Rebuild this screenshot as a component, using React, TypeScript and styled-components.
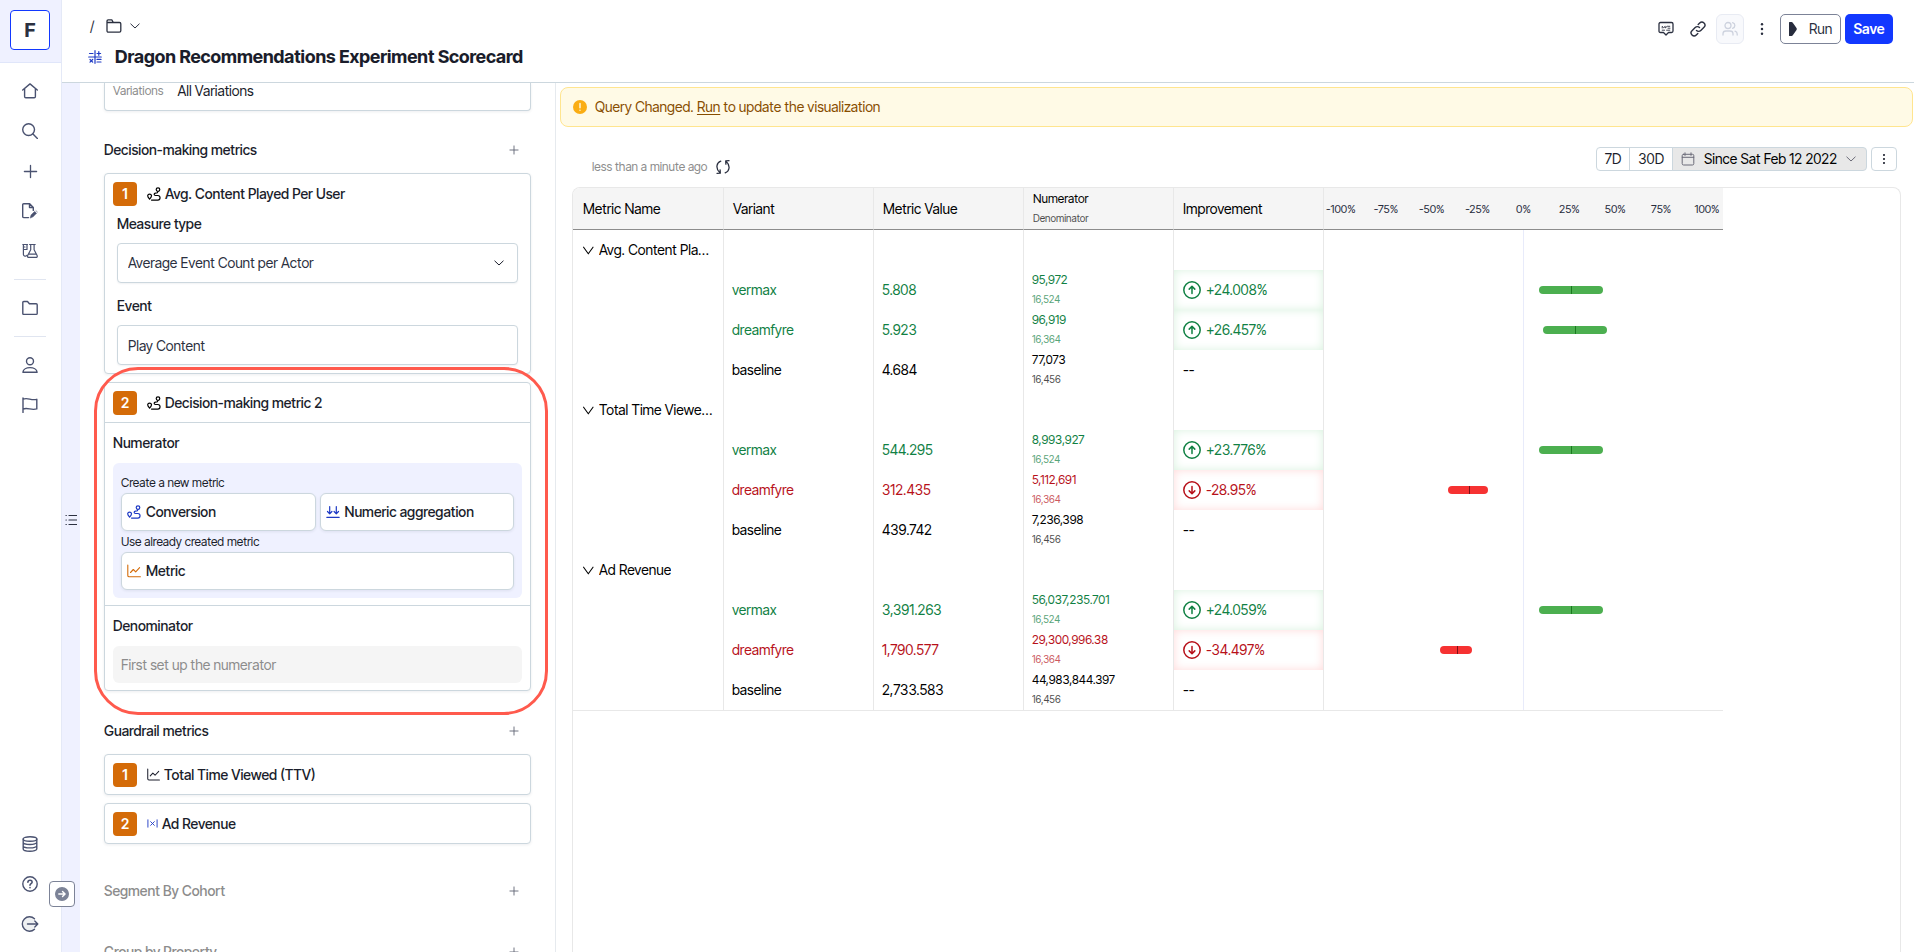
import React from "react";
import styled, { createGlobalStyle, css } from "styled-components";

const ink = "#1a1d2b";
const slate = "#4a5270";
const line = "#ccd7de";
const tableLine = "#e8e8e8";
const lavender = "#eff1ff";
const orange = "#d46b08";
const blue = "#1d39c4";
const green = "#108043";
const red = "#b71019";

const GlobalStyle = createGlobalStyle`
  *, *::before, *::after { box-sizing: border-box; }
  body {
    margin: 0;
    color: ${ink};
    background: #fff;
    font-family: "Inter Tight", "Inter Display", Inter, "Liberation Sans", sans-serif;
    font-size: 14px;
    line-height: 20px;
  }
  button, input, select { font: inherit; color: inherit; margin: 0; }
  button { cursor: pointer; }
  h1, h2, h3 { margin: 0; font-size: 14px; font-weight: 500; }
  svg { display: block; flex: none; }
`;

/* ---------- icons ---------- */

type IconProps = { size?: number; stroke?: number; box?: number; children: React.ReactNode };
const Icon = ({ size = 16, stroke = 1.4, box = 16, children }: IconProps) => (
  <svg width={size} height={size} viewBox={`0 0 ${box} ${box}`} fill="none" stroke="currentColor"
    strokeWidth={stroke} strokeLinecap="round" strokeLinejoin="round" aria-hidden="true">
    {children}
  </svg>
);

const HomeIcon = () => <Icon><path d="M.7 7 8 .9 15.3 7M2.6 5.6v8q0 1.2 1.200 1.200h8.400q1.200 0 1.200-1.200v-8" /></Icon>;
const SearchIcon = () => <Icon><circle cx="6.600" cy="6.600" r="5.900" /><path d="m11 11 4.400 4.400" /></Icon>;
const PlusIcon = ({ size = 16 }: { size?: number }) => <Icon size={size}><path d="M8 1.500v13M1.500 8h13" /></Icon>;
const DocEditIcon = () => (
  <Icon>
    <path d="M6.500 14.600H1.700q-1 0-1-1V1.800q0-1 1-1h6l3.600 3.600v3M7.500 1v3.500H11" />
    <path d="m8.300 14.700.8-2.800 3.600-3.500 1.800 1.800-3.500 3.600zM14 7.700l1.400 1.300" fill="currentColor" strokeWidth=".6" />
  </Icon>
);
const LabIcon = () => (
  <Icon stroke={1.200}>
    <path d="M.8 1.500h4.700M1.400 1.500v10a1.900 1.900 0 0 0 3.500.8M5 1.500v5M1.400 6.500H5M1.400 4H3" />
    <path d="M7.600 1.500h5.600M8.700 1.500v5.300l-2.900 5.400q-.9 2.200 1.200 2.200h6.800q2.100 0 1.200-2.200l-2.900-5.400V1.500M6.500 11.200h7.800" />
  </Icon>
);
const FolderIcon = () => <Icon><path d="M.8 13.400V2.500q0-1 1-1h3.700l1.900 2.300h6.800q1 0 1 1v8.600q0 1-1 1H1.800q-1 0-1-1Z" /></Icon>;
const UserIcon = () => <Icon><circle cx="8" cy="4.300" r="3.500" /><path d="M.9 15.200c.5-6.100 13.700-6.100 14.200 0Z" /></Icon>;
const FlagIcon = () => <Icon><path d="M1 15.500V1M1 2.200c5-2 8 1.700 13.800.1v9.600C9 13.600 6 10.200 1 12" /></Icon>;
const DatabaseIcon = () => (
  <Icon><ellipse cx="8" cy="3" rx="6.800" ry="2.200" /><path d="M1.200 3v10c0 2.900 13.600 2.900 13.600 0V3M1.200 6.300c0 2.900 13.600 2.900 13.600 0M1.200 9.700c0 2.900 13.600 2.900 13.600 0" /></Icon>
);
const HelpIcon = () => (
  <Icon><circle cx="8" cy="8" r="7.200" /><path d="M5.900 6.200c.1-2.700 4.300-2.600 4.200 0 0 1.400-2.100 1.500-2.100 3M8 11.600v.1" strokeWidth="1.600" /></Icon>
);
const LogoutIcon = () => (
  <Icon size={18} box={18}><path d="M13.500 3.800A7.200 7.200 0 1 0 13.500 14.200" fill="#eef0f2" /><path d="M6.500 9h10.300M13.800 6l3 3-3 3" /></Icon>
);
const ListIcon = () => (
  <Icon size={12} box={12} stroke={1.200}><path d="M4 1.500h7.500M4 6h7.500M4 10.500h7.500M1 1.500h.3M1 6h.3M1 10.500h.3" /></Icon>
);
const ArrowDotIcon = () => (
  <Icon size={14} box={14}><circle cx="7" cy="7" r="6.300" fill="#7c8397" stroke="#7c8397" /><path d="M3.800 7H10M7.500 4.400 10.100 7l-2.600 2.600" stroke="#fff" /></Icon>
);
const BreadcrumbFolderIcon = () => (
  <Icon stroke={1.300}><path d="M1 4.500h12.500q1.300 0 1.300 1.300v7q0 1.400-1.400 1.400H2.400Q1 14.200 1 12.800V2.900q0-1.100 1.100-1.100h3.700l1.400 2.600" /></Icon>
);
const ChevronIcon = ({ size = 10 }: { size?: number }) => (
  <Icon size={size} box={10} stroke={1}><path d="M.8 3 5 7l4.200-4" /></Icon>
);
const GroupChevronIcon = () => <Icon size={11} box={11} stroke={1.100}><path d="m.6 2.200 4.700 6.600 4.700-6.600" /></Icon>;
const ScorecardIcon = () => (
  <Icon size={14} box={14} stroke={1.200}>
    <path d="M7 .7v12.600M.7 7h12.600M1.500 3.500H5M9 3.500h3.600M10.800 1.700v3.600M9 9.400h4M9 12h4M2 9.500l2.700 2.700M4.700 9.500 2 12.200" />
  </Icon>
);
const ConversionIcon = () => (
  <Icon size={14} box={14} stroke={1.200}>
    <circle cx="11" cy="2.600" r="1.800" />
    <path d="M11 4.500c-.2 1.600-1.200 1.700-2.500 1.700-1.800 0-1.800 2.300 0 2.300h2.300c3 0 3 4.600 0 4.600H4.500M2.600 12.200C.8 10 .6 9.300.7 8.600c.3-1.900 3.500-1.900 3.800 0 .1.700-.1 1.400-1.900 3.600Z" />
  </Icon>
);
const AggregationIcon = () => (
  <Icon size={14} box={14} stroke={1.200}><path d="M3.700 1.500v7.300M1.500 6.500l2.200 2.300 2.200-2.300M10.300 1.500v7.300M8.100 6.500l2.200 2.300 2.200-2.300M.8 12.300h12.400" /></Icon>
);
const TrendIcon = ({ size = 14 }: { size?: number }) => (
  <Icon size={size} box={14} stroke={1.100}><path d="M.8 1v10.500q0 1.300 1.300 1.300h11.300M3.500 8.500l2.800-3 2.400 2.300 3.900-4.200" /></Icon>
);
const FormulaIcon = () => <Icon size={11} box={12} stroke={1}><path d="M1 2v8M11 2v8M4 4l4 4M8 4 4 8" /></Icon>;
const CommentIcon = () => (
  <Icon stroke={1.300}><path d="M2.500 1.500h11q1.500 0 1.500 1.500v7q0 1.500-1.500 1.500h-3L8 14l-2.500-2.500h-3Q1 11.500 1 10V3q0-1.500 1.500-1.500Z" /><path d="M4.200 7V5.300l1.500 1.400 1.500-1.400V7l2-1.700h2.600M4.200 9.200h2.400M8.600 9.200h3.200M10 7.200h2" strokeWidth=".9" /></Icon>
);
const LinkIcon = () => (
  <Icon stroke={1.400}><path d="M6.500 9.500a3 3 0 0 0 4.300 0l3.200-3.200A3 3 0 0 0 9.700 2L8.200 3.500M9.500 6.500a3 3 0 0 0-4.300 0L2 9.700A3 3 0 0 0 6.300 14l1.500-1.500" /></Icon>
);
const UsersIcon = () => (
  <Icon stroke={1.300}><circle cx="6" cy="4.500" r="3" /><path d="M1 14v-1.200C1 11 2.300 10 4 10h4c1.700 0 3 1 3 2.800V14M10.600 1.700c3 .9 3 4.700 0 5.600M13 10.200c1.400.5 2.200 1.400 2.200 2.800v1" /></Icon>
);
const KebabIcon = ({ size = 16 }: { size?: number }) => (
  <Icon size={size}><g fill="currentColor" stroke="none"><circle cx="8" cy="2.600" r="1.400" /><circle cx="8" cy="8" r="1.400" /><circle cx="8" cy="13.400" r="1.400" /></g></Icon>
);
const PlayIcon = () => (
  <svg width="10" height="14" viewBox="0 0 10 14" fill="#272c3d" aria-hidden="true"><path d="M1 .5q0-.5.600-.5h2q.7 0 1.200.7L8.500 6q.7 1 0 2l-3.700 5.300q-.5.700-1.200.7h-2q-.6 0-.6-.5Z" /></svg>
);
const CalendarIcon = () => <Icon size={14} box={14} stroke={1}><path d="M2.500 2.300h9q1.300 0 1.300 1.300v8q0 1.400-1.400 1.400H2.600q-1.400 0-1.400-1.400v-8q0-1.300 1.300-1.300ZM1.200 5.300h11.600M4 .8v2.600M10 .8v2.600" /></Icon>;
const RefreshIcon = () => (
  <Icon size={14} box={14} stroke={1.300}><path d="M4.800 1.200C.6 2.600-.8 8.200 3.800 12.600M1 13.300l3.300-.2-.2-3.300M9.200 12.800c4.200-1.400 5.600-7 1-11.400M13 .7 9.700.9l.2 3.300" /></Icon>
);
const WarningIcon = () => (
  <Icon size={14} box={14} stroke={1.400}><circle cx="7" cy="7" r="7" fill="#faad14" stroke="none" /><path d="M7 3.500v4.200M7 10.200v.1" stroke="#fffae6" /></Icon>
);
const TrendCircleIcon = ({ up }: { up: boolean }) => (
  <Icon size={18} box={18} stroke={1.500}><circle cx="9" cy="9" r="8.200" />{up ? <path d="M9 12.500v-7M6.200 8.100 9 5.300l2.800 2.800" /> : <path d="M9 5.500v7M6.200 9.900 9 12.700l2.800-2.800" />}</Icon>
);

/* ---------- shell ---------- */

const Shell = styled.div`
  display: flex;
  height: 100vh;
  overflow: hidden;
`;
const Sidebar = styled.nav`
  position: relative;
  z-index: 2;
  flex: none;
  display: flex;
  flex-direction: column;
  width: 62px;
  border-right: 1px solid #e4e9f7;
  padding-bottom: 8px;
  color: ${slate};
`;
const LogoArea = styled.div`
  padding: 10px;
  height: 63px;
  margin-bottom: 8px;
  border-bottom: 1px solid #e0e6fa;
  background: ${lavender};
`;
const Logo = styled.a`
  display: grid;
  place-items: center;
  width: 40px;
  height: 40px;
  border: 1px solid #1238ff;
  border-radius: 4px;
  background: #fff;
  color: #2b3040;
  font-size: 20px;
  font-weight: 700;
  text-decoration: none;
`;
const NavItem = styled.a`
  display: grid;
  place-items: center;
  width: 60px;
  height: 40px;
  color: inherit;
`;
const NavDivider = styled.hr`
  width: 32px;
  height: 1px;
  margin: 8px 14px;
  border: 0;
  background: #e0e5f0;
`;
const NavSpacer = styled.div`flex: 1;`;
const ExpandButton = styled.button`
  position: absolute;
  right: -14px;
  bottom: 45px;
  display: grid;
  place-items: center;
  width: 26px;
  height: 26px;
  padding: 0;
  border: 1px solid #7c8397;
  border-radius: 4px;
  background: #fff;
`;
const Page = styled.div`
  flex: 1;
  min-width: 0;
  display: flex;
  flex-direction: column;
`;
const Header = styled.header`
  display: flex;
  justify-content: space-between;
  align-items: flex-start;
  height: 83px;
  padding: 14px 21px 0 26px;
  border-bottom: 1px solid ${line};
`;
const Heading = styled.div`
  display: grid;
  gap: 7px;
`;
const Breadcrumbs = styled.div`
  display: flex;
  align-items: center;
  gap: 8px;
  height: 24px;
  padding-left: 2px;
  color: #2b3040;
`;
const Crumb = styled.span`width: 8px;`;
const TitleRow = styled.div`
  display: flex;
  align-items: center;
  gap: 13px;
  color: ${blue};
`;
const Title = styled.h1`
  color: ${ink};
  font-size: 18px;
  line-height: 24px;
  font-weight: 700;
`;
const Actions = styled.div`
  display: flex;
  align-items: center;
  gap: 4px;
`;
const IconButton = styled.button<{ $muted?: boolean }>`
  display: grid;
  place-items: center;
  width: 28px;
  height: 30px;
  padding: 0;
  border: 1px solid transparent;
  border-radius: 6px;
  background: transparent;
  color: #2b3040;
  ${p => p.$muted && css`
    border-color: #e8ebf3;
    background: #f8f9fc;
    color: #cdd2de;
  `}
`;
const RunButton = styled.button`
  display: flex;
  align-items: center;
  gap: 11px;
  width: 61px;
  height: 30px;
  padding: 0 7px;
  border: 1px solid #7c8397;
  border-radius: 5px;
  background: #fff;
  color: #2b3040;
`;
const SaveButton = styled.button`
  width: 48px;
  height: 30px;
  padding: 0;
  border: 0;
  border-radius: 5px;
  background: #1238ff;
  color: #fff;
  font-weight: 600;
`;
const Workspace = styled.div`
  flex: 1;
  min-height: 0;
  display: flex;
`;
const Rail = styled.div`
  flex: none;
  display: grid;
  place-items: center;
  width: 18px;
  padding-top: 4px;
  background: ${lavender};
`;
const RailButton = styled.button`
  display: grid;
  place-items: center;
  width: 18px;
  height: 24px;
  padding: 0;
  border: 0;
  background: transparent;
  color: #2b3040;
`;

/* ---------- query builder panel ---------- */

const Panel = styled.aside`
  flex: none;
  width: 476px;
  padding: 0 24px;
  border-right: 1px solid #e6eaee;
  overflow: hidden;
`;
const Card = styled.section`
  position: relative;
  border: 1px solid ${line};
  border-radius: 4px;
  background: #fff;
  box-shadow: 0 1px 3px rgba(20, 40, 60, 0.08);
  & + & { margin-top: 8px; }
`;
const ClippedCard = styled(Card)`
  display: flex;
  gap: 14px;
  height: 28px;
  padding: 0 8px;
  border-top: 0;
  border-radius: 0 0 4px 4px;
  line-height: 16px;
`;
const FieldName = styled.span`
  color: #8c8c8c;
  font-size: 12px;
`;
const HighlightedCard = styled(Card)`
  &::after {
    content: "";
    position: absolute;
    inset: -16px -18px -25px -11px;
    border: 3px solid #ff5a4d;
    border-radius: 44px;
    pointer-events: none;
  }
`;
const SectionHeader = styled.div<{ $muted?: boolean; $space: number }>`
  display: flex;
  align-items: center;
  justify-content: space-between;
  height: 24px;
  margin-top: ${p => p.$space}px;
  padding-right: 8px;
  color: ${p => (p.$muted ? "#8c8c8c" : ink)};
`;
const AddButton = styled.button`
  display: grid;
  place-items: center;
  width: 18px;
  height: 18px;
  padding: 0;
  border: 0;
  background: transparent;
  color: #5c6170;
`;
const CardList = styled.div`margin-top: 11px;`;
const CardHeader = styled.div<{ $ruled?: boolean; $tint?: string }>`
  display: flex;
  align-items: center;
  gap: 4px;
  height: ${p => (p.$ruled ? 40 : 39)}px;
  padding: 0 8px;
  border-bottom: ${p => (p.$ruled ? `1px solid ${line}` : "0")};
  color: ${p => p.$tint ?? "#000"};
`;
const Badge = styled.span`
  display: grid;
  place-items: center;
  width: 24px;
  height: 24px;
  margin-right: 6px;
  border-radius: 4px;
  background: ${orange};
  color: #fff;
  font-weight: 600;
`;
const CardTitle = styled.h3`color: ${ink};`;
const Fields = styled.div`
  display: grid;
  padding: 1px 12px 8px;
`;
const FieldLabel = styled.label<{ $space?: number }>`
  margin-top: ${p => p.$space ?? 0}px;
  margin-bottom: 9px;
  font-weight: 500;
`;
const SelectBox = styled.div`
  display: grid;
  align-items: center;
  position: relative;
  & > svg { position: absolute; right: 14px; pointer-events: none; }
`;
const controlStyle = css`
  width: 100%;
  height: 40px;
  padding: 0 10px;
  border: 1px solid ${line};
  border-radius: 4px;
  background: #fff;
  color: #2b3040;
  box-shadow: 0 1px 2px rgba(20, 40, 60, 0.06);
`;
const Select = styled.select`${controlStyle} appearance: none;`;
const TextInput = styled.input`${controlStyle}`;
const Block = styled.div<{ $ruled?: boolean }>`
  display: grid;
  gap: 10px;
  padding: 10px 8px 7px;
  border-bottom: ${p => (p.$ruled ? `1px solid ${line}` : "0")};
`;
const BlockLabel = styled.label`
  display: block;
  font-weight: 500;
`;
const Chooser = styled.div`
  display: grid;
  grid-template-columns: 1fr 1fr;
  column-gap: 4px;
  padding: 9px 8px 8px;
  border-radius: 6px;
  background: ${lavender};
`;
const Hint = styled.span`
  grid-column: 1 / -1;
  font-size: 12px;
  line-height: 21px;
`;
const ChoiceButton = styled.button<{ $wide?: boolean; $tint: string }>`
  grid-column: ${p => (p.$wide ? "1 / -1" : "auto")};
  display: flex;
  align-items: center;
  gap: 5px;
  height: 38px;
  padding: 0 5px;
  border: 1px solid ${line};
  border-radius: 6px;
  background: #fff;
  color: ${p => p.$tint};
  box-shadow: 0 1px 3px rgba(20, 40, 60, 0.08);
`;
const ChoiceText = styled.span`
  color: ${ink};
  font-weight: 500;
`;
const DisabledInput = styled.input`
  width: 100%;
  height: 37px;
  padding: 0 8px;
  border: 0;
  border-radius: 6px;
  background: #f5f5f5;
  &::placeholder { color: #8c8c8c; opacity: 1; }
`;

/* ---------- results ---------- */

const Results = styled.main`
  flex: 1;
  min-width: 0;
  display: flex;
  flex-direction: column;
  padding: 4px 1px 0 4px;
`;
const Banner = styled.div`
  display: flex;
  align-items: center;
  gap: 8px;
  height: 40px;
  padding: 0 12px;
  border: 1px solid #ffe58f;
  border-radius: 8px;
  background: #fffae6;
  color: #874d00;
`;
const BannerLink = styled.a`color: inherit; text-underline-offset: 2px;`;
const Toolbar = styled.div`
  display: flex;
  justify-content: space-between;
  align-items: flex-start;
  height: 60px;
  padding: 20px 16px 0 32px;
`;
const Freshness = styled.div`
  display: flex;
  align-items: center;
  gap: 9px;
  padding-top: 10px;
  color: #8c8c8c;
  font-size: 12px;
`;
const RefreshButton = styled.button`
  padding: 0;
  border: 0;
  background: transparent;
  color: #2b3040;
`;
const Ranges = styled.div`
  display: flex;
`;
const RangeButton = styled.button<{ $active?: boolean }>`
  display: flex;
  align-items: center;
  gap: 8px;
  height: 24px;
  padding: 0 8px;
  margin-left: -1px;
  border: 1px solid ${line};
  background: #fff;
  &:first-child { border-radius: 4px 0 0 4px; }
  ${p => p.$active && css`
    gap: 9px;
    padding: 0 10px 0 8px;
    border-radius: 0 4px 4px 0;
    background: #e8e8e8;
    color: #6b6b78;
  `}
`;
const RangeText = styled.span`color: #000;`;
const MoreButton = styled.button`
  display: grid;
  place-items: center;
  width: 26px;
  height: 24px;
  margin-left: 4px;
  padding: 0;
  border: 1px solid ${line};
  border-radius: 4px;
  background: #fff;
`;
const TableFrame = styled.div`
  flex: 1;
  margin: 0 12px;
  border: 1px solid ${tableLine};
  border-bottom: 0;
  border-radius: 8px 8px 0 0;
  overflow: hidden;
`;
const Table = styled.table`
  width: 1150px;
  table-layout: fixed;
  border-collapse: separate;
  border-spacing: 0;
  border-bottom: 1px solid ${tableLine};
  color: #000;
`;
const Column = styled.col<{ $wide?: boolean }>`width: ${p => (p.$wide ? 400 : 150)}px;`;
const HeadCell = styled.th`
  height: 42px;
  padding: 0 9px;
  border-left: 1px solid ${tableLine};
  border-bottom: 1px solid #8c8c8c;
  background: #f5f5f5;
  font-weight: 400;
  text-align: left;
  &:first-child { border-left: 0; padding-left: 10px; }
`;
const ScaleHead = styled(HeadCell)`padding: 0;`;
const Scale = styled.div`
  display: flex;
  justify-content: space-between;
  padding: 0 2px;
  color: #272c3d;
  font-size: 11px;
`;
const Tick = styled.span`
  flex: none;
  width: 28px;
  text-align: center;
`;
type Tone = "up" | "down" | "none";
const toneColor = (t: Tone) => (t === "up" ? green : t === "down" ? red : "#000");
const Cell = styled.td<{ $tone?: Tone }>`
  height: 40px;
  padding: 0 8px;
  border-left: 1px solid ${tableLine};
  color: ${p => toneColor(p.$tone ?? "none")};
  &:first-child { border-left: 0; padding: 0 10px; }
`;
const GroupToggle = styled.button`
  display: flex;
  align-items: center;
  gap: 5px;
  width: 100%;
  padding: 0;
  border: 0;
  background: transparent;
  text-align: left;
`;
const GroupName = styled.span`
  overflow: hidden;
  text-overflow: ellipsis;
  white-space: nowrap;
`;
const Stack = styled.div`
  display: grid;
  padding-bottom: 2px;
  font-size: 12px;
`;
const SubValue = styled.span`
  font-size: 10px;
  line-height: 18px;
  opacity: 0.7;
`;
const ChangeCell = styled(Cell)`
  padding-left: 9px;
  box-shadow: ${p => (p.$tone === "up" ? "inset 0 0 10px #d9f2df" : p.$tone === "down" ? "inset 0 0 10px #ffdada" : "none")};
`;
const Change = styled.div`
  display: flex;
  align-items: center;
  gap: 5px;
`;
const PlotCell = styled(Cell)`
  padding: 0;
  background: linear-gradient(#e8ebfa, #e8ebfa) center / 1px 100% no-repeat;
`;
const Plot = styled.div`position: relative; height: 8px;`;
const Interval = styled.div<{ $tone: Tone }>`
  position: absolute;
  height: 8px;
  border-radius: 4px;
  background: ${p => (p.$tone === "up" ? "#4caf50" : "#f63232")};
`;
const Estimate = styled.div<{ $tone: Tone }>`
  position: absolute;
  width: 1px;
  height: 8px;
  background: ${p => (p.$tone === "up" ? "#1b7a20" : "#7d1016")};
`;

/* ---------- data ---------- */

type Row = { variant: string; value: string; num: string; den: string; change: string; tone: Tone; interval?: [number, number, number] };
type Group = { name: string; rows: Row[] };
const wide: [number, number, number] = [7.75, 24, 39.75];
const groups: Group[] = [
  { name: "Avg. Content Played Per User", rows: [
    { variant: "vermax", value: "5.808", num: "95,972", den: "16,524", change: "+24.008%", tone: "up", interval: wide },
    { variant: "dreamfyre", value: "5.923", num: "96,919", den: "16,364", change: "+26.457%", tone: "up", interval: [9.75, 26, 41.75] },
    { variant: "baseline", value: "4.684", num: "77,073", den: "16,456", change: "--", tone: "none" },
  ] },
  { name: "Total Time Viewed (TTV)", rows: [
    { variant: "vermax", value: "544.295", num: "8,993,927", den: "16,524", change: "+23.776%", tone: "up", interval: wide },
    { variant: "dreamfyre", value: "312.435", num: "5,112,691", den: "16,364", change: "-28.95%", tone: "down", interval: [-37.75, -27.5, -17.75] },
    { variant: "baseline", value: "439.742", num: "7,236,398", den: "16,456", change: "--", tone: "none" },
  ] },
  { name: "Ad Revenue", rows: [
    { variant: "vermax", value: "3,391.263", num: "56,037,235.701", den: "16,524", change: "+24.059%", tone: "up", interval: wide },
    { variant: "dreamfyre", value: "1,790.577", num: "29,300,996.38", den: "16,364", change: "-34.497%", tone: "down", interval: [-41.75, -33.5, -25.75] },
    { variant: "baseline", value: "2,733.583", num: "44,983,844.397", den: "16,456", change: "--", tone: "none" },
  ] },
];
const ticks = ["-100%", "-75%", "-50%", "-25%", "0%", "25%", "50%", "75%", "100%"];
const onScale = (v: number) => `${50 + v / 2}%`;

const SectionTitle = ({ title, space, muted }: { title: string; space: number; muted?: boolean }) => (
  <SectionHeader $space={space} $muted={muted}>
    <h2>{title}</h2>
    <AddButton aria-label={`Add to ${title}`}><PlusIcon size={10} /></AddButton>
  </SectionHeader>
);

const MetricHeader = ({ index, title, icon, ruled, tint }: { index: number; title: string; icon: React.ReactNode; ruled?: boolean; tint?: string }) => (
  <CardHeader $ruled={ruled} $tint={tint}>
    <Badge>{index}</Badge>
    {icon}
    <CardTitle>{title}</CardTitle>
  </CardHeader>
);

const VariantRow = ({ row }: { row: Row }) => (
  <tr>
    <Cell />
    <Cell $tone={row.tone}>{row.variant}</Cell>
    <Cell $tone={row.tone}>{row.value}</Cell>
    <Cell $tone={row.tone}><Stack><span>{row.num}</span><SubValue>{row.den}</SubValue></Stack></Cell>
    <ChangeCell $tone={row.tone}>
      <Change>{row.tone !== "none" && <TrendCircleIcon up={row.tone === "up"} />}{row.change}</Change>
    </ChangeCell>
    <PlotCell>
      {row.interval && (
        <Plot>
          <Interval $tone={row.tone} style={{ left: onScale(row.interval[0]), width: `${(row.interval[2] - row.interval[0]) / 2}%` }} />
          <Estimate $tone={row.tone} style={{ left: onScale(row.interval[1]) }} />
        </Plot>
      )}
    </PlotCell>
  </tr>
);

export default function App() {
  return (
    <Shell>
      <GlobalStyle />
      <Sidebar aria-label="Main">
        <LogoArea><Logo href="#">F</Logo></LogoArea>
        <NavItem href="#" aria-label="Home"><HomeIcon /></NavItem>
        <NavItem href="#" aria-label="Search"><SearchIcon /></NavItem>
        <NavItem href="#" aria-label="Create"><PlusIcon size={15} /></NavItem>
        <NavItem href="#" aria-label="Drafts"><DocEditIcon /></NavItem>
        <NavItem href="#" aria-label="Experiments"><LabIcon /></NavItem>
        <NavDivider />
        <NavItem href="#" aria-label="Folders"><FolderIcon /></NavItem>
        <NavDivider />
        <NavItem href="#" aria-label="Profile"><UserIcon /></NavItem>
        <NavItem href="#" aria-label="Flags"><FlagIcon /></NavItem>
        <NavSpacer />
        <NavItem href="#" aria-label="Data"><DatabaseIcon /></NavItem>
        <NavItem href="#" aria-label="Help"><HelpIcon /></NavItem>
        <NavItem href="#" aria-label="Log out"><LogoutIcon /></NavItem>
        <ExpandButton aria-label="Expand navigation"><ArrowDotIcon /></ExpandButton>
      </Sidebar>
      <Page>
        <Header>
          <Heading>
            <Breadcrumbs><Crumb>/</Crumb><BreadcrumbFolderIcon /><ChevronIcon /></Breadcrumbs>
            <TitleRow><ScorecardIcon /><Title>Dragon Recommendations Experiment Scorecard</Title></TitleRow>
          </Heading>
          <Actions>
            <IconButton aria-label="Comments"><CommentIcon /></IconButton>
            <IconButton aria-label="Copy link"><LinkIcon /></IconButton>
            <IconButton aria-label="Share" $muted disabled><UsersIcon /></IconButton>
            <IconButton aria-label="More"><KebabIcon size={14} /></IconButton>
            <RunButton><PlayIcon />Run</RunButton>
            <SaveButton>Save</SaveButton>
          </Actions>
        </Header>
        <Workspace>
          <Rail><RailButton aria-label="Toggle outline"><ListIcon /></RailButton></Rail>
          <Panel>
            <ClippedCard><FieldName>Variations</FieldName>All Variations</ClippedCard>

            <SectionTitle title="Decision-making metrics" space={27} />
            <CardList>
              <Card>
                <MetricHeader index={1} title="Avg. Content Played Per User" icon={<ConversionIcon />} />
                <Fields>
                  <FieldLabel htmlFor="measure">Measure type</FieldLabel>
                  <SelectBox>
                    <Select id="measure" defaultValue="avg"><option value="avg">Average Event Count per Actor</option></Select>
                    <ChevronIcon />
                  </SelectBox>
                  <FieldLabel htmlFor="event" $space={13}>Event</FieldLabel>
                  <TextInput id="event" defaultValue="Play Content" />
                </Fields>
              </Card>
              <HighlightedCard>
                <MetricHeader index={2} title="Decision-making metric 2" icon={<ConversionIcon />} ruled />
                <Block $ruled>
                  <BlockLabel as="h3">Numerator</BlockLabel>
                  <Chooser>
                    <Hint>Create a new metric</Hint>
                    <ChoiceButton $tint={blue}><ConversionIcon /><ChoiceText>Conversion</ChoiceText></ChoiceButton>
                    <ChoiceButton $tint={blue}><AggregationIcon /><ChoiceText>Numeric aggregation</ChoiceText></ChoiceButton>
                    <Hint>Use already created metric</Hint>
                    <ChoiceButton $tint={orange} $wide><TrendIcon /><ChoiceText>Metric</ChoiceText></ChoiceButton>
                  </Chooser>
                </Block>
                <Block>
                  <BlockLabel htmlFor="denominator">Denominator</BlockLabel>
                  <DisabledInput id="denominator" placeholder="First set up the numerator" disabled />
                </Block>
              </HighlightedCard>
            </CardList>

            <SectionTitle title="Guardrail metrics" space={28} />
            <CardList>
              <Card><MetricHeader index={1} title="Total Time Viewed (TTV)" icon={<TrendIcon size={13} />} tint={ink} /></Card>
              <Card><MetricHeader index={2} title="Ad Revenue" icon={<FormulaIcon />} tint={blue} /></Card>
            </CardList>

            <SectionTitle title="Segment By Cohort" space={35} muted />
            <SectionTitle title="Group by Property" space={37} muted />
          </Panel>
          <Results>
            <Banner role="status">
              <WarningIcon />
              <span>Query Changed. <BannerLink href="#">Run</BannerLink> to update the visualization</span>
            </Banner>
            <Toolbar>
              <Freshness>less than a minute ago<RefreshButton aria-label="Refresh"><RefreshIcon /></RefreshButton></Freshness>
              <Ranges>
                <RangeButton>7D</RangeButton>
                <RangeButton>30D</RangeButton>
                <RangeButton $active><CalendarIcon /><RangeText>Since Sat Feb 12 2022</RangeText><ChevronIcon /></RangeButton>
                <MoreButton aria-label="More options"><KebabIcon size={12} /></MoreButton>
              </Ranges>
            </Toolbar>
            <TableFrame>
              <Table>
                <colgroup><Column /><Column /><Column /><Column /><Column /><Column $wide /></colgroup>
                <thead>
                  <tr>
                    <HeadCell>Metric Name</HeadCell>
                    <HeadCell>Variant</HeadCell>
                    <HeadCell>Metric Value</HeadCell>
                    <HeadCell><Stack><span>Numerator</span><SubValue>Denominator</SubValue></Stack></HeadCell>
                    <HeadCell>Improvement</HeadCell>
                    <ScaleHead><Scale>{ticks.map(t => <Tick key={t}>{t}</Tick>)}</Scale></ScaleHead>
                  </tr>
                </thead>
                <tbody>
                  {groups.map(g => (
                    <React.Fragment key={g.name}>
                      <tr>
                        <Cell><GroupToggle aria-expanded="true"><GroupChevronIcon /><GroupName>{g.name}</GroupName></GroupToggle></Cell>
                        <Cell /><Cell /><Cell /><Cell /><PlotCell />
                      </tr>
                      {g.rows.map(r => <VariantRow key={r.variant} row={r} />)}
                    </React.Fragment>
                  ))}
                </tbody>
              </Table>
            </TableFrame>
          </Results>
        </Workspace>
      </Page>
    </Shell>
  );
}
